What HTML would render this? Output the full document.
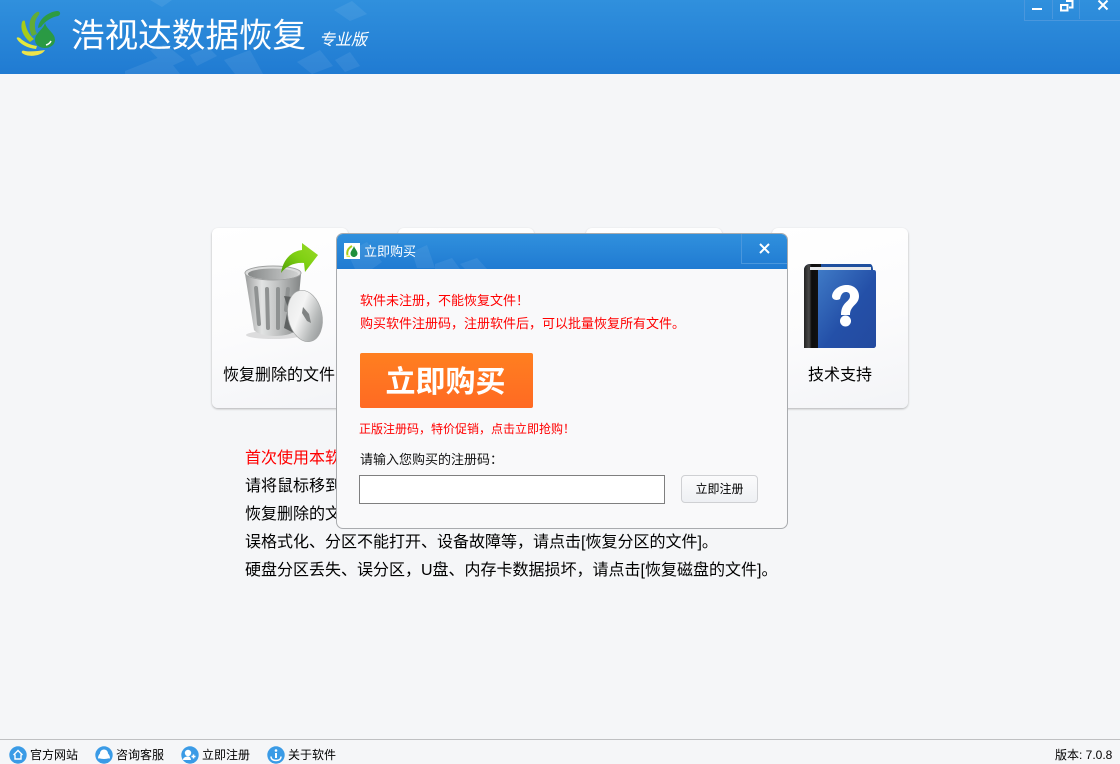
<!DOCTYPE html>
<html lang="zh"><head><meta charset="utf-8"><title>浩视达数据恢复</title>
<style>
*{box-sizing:border-box;margin:0;padding:0}
html,body{width:1120px;height:764px;overflow:hidden;background:#f5f6f8}
body{position:relative;font-family:"Liberation Sans","Noto Sans CJK SC","WenQuanYi Zen Hei",sans-serif;color:#000}
.a{position:absolute}
.t{position:absolute;white-space:nowrap}
.hdr{background:linear-gradient(#3090dd,#207bd2);overflow:hidden}
.card{position:absolute;top:228px;width:136px;height:180px;border-radius:6px;background:linear-gradient(165deg,#fff 0%,#fbfbfc 55%,#f3f4f7 100%);box-shadow:0 1px 2px rgba(0,0,0,.28)}
.card .t{left:-1px;width:136px;text-align:center;top:136px;font-size:16px;line-height:24px}
.ln{font-size:16px;line-height:28px;left:245px}
.foot{font-size:12px;line-height:16px;top:747px}
</style></head><body>

<div class="a hdr" style="left:0;top:0;width:1120px;height:74px">
<svg class="a" style="left:0;top:0" width="400" height="74" viewBox="0 0 400 74"><g fill="#fff" opacity=".07">
<polygon points="150,0 172,0 162,7"/>
<polygon points="334,10 352,1 367,14 350,21"/>
<polygon points="125,71 165,55 180,74 125,74"/>
<polygon points="150,50 165,44 185,60 167,68"/>
<polygon points="190,55 208,47 217,56 197,66"/>
<polygon points="224,60 250,50 263,74 235,74"/>
<polygon points="297,62 320,50 333,66 312,74"/>
<polygon points="335,60 350,52 360,66 345,72"/>
</g></svg>
</div>

<svg class="a" style="left:12px;top:4px" width="56" height="60" viewBox="0 0 56 60">
<path d="M26 24C27 15 36 8 45 7C49 7 49 11 46 12C40 13 33 17 29 23Z" fill="#2d9b44"/>
<path d="M20 32C15 21 18 12 25 8C28 7 28 10 26 12C22 17 22 24 25 30Z" fill="#62ac36"/>
<path d="M18 38C11 32 8 25 10 18C11 16 13 16 13 18C14 25 17 31 22 35Z" fill="#a8cc18"/>
<path d="M5 35C4 33 6 33 8 34C12 38 18 41 25 42L24 45C15 44 8 40 5 35Z" fill="#e3e83c"/>
<path d="M10 49C9 47 11 46 13 47C19 48 26 47 33 46C30 52 16 54 10 49Z" fill="#eee44a"/>
<path d="M33 19C35 26 43 29 43 36C43 41 38 44 33 44C28 44 23 41 23 36C23 29 31 26 33 19Z" fill="#2a9a44"/>
<path d="M34 41C36 40.500 38 39 39 37" stroke="#fff" stroke-width="1.500" fill="none"/>
</svg>

<div class="t" style="left:71px;top:15px;font-size:33.600px;line-height:44px;color:#fff">浩视达数据恢复</div>
<div class="t" style="left:319px;top:30px;font-size:16px;line-height:22px;color:#fff;font-style:italic">专业版</div>

<div class="a" style="left:1024px;top:0;width:96px;height:21px;border:1px solid #4a97dd;border-top:0;border-right:0"></div>
<div class="a" style="left:1052px;top:0;width:1px;height:19px;background:#4a97dd"></div>
<div class="a" style="left:1079px;top:0;width:1px;height:19px;background:#4a97dd"></div>
<div class="a" style="left:1032px;top:8px;width:10px;height:2px;background:#fff"></div>
<svg class="a" style="left:1060px;top:0" width="14" height="12" viewBox="0 0 14 12"><path d="M6 1H12.500V7.500H9M1 5H7.500V10.500H1Z" fill="none" stroke="#fff" stroke-width="2"/></svg>
<svg class="a" style="left:1097px;top:0" width="12" height="11" viewBox="0 0 12 11"><path d="M1.500 .5L10.500 9.500M10.500 .5L1.500 9.500" stroke="#fff" stroke-width="2"/></svg>

<div class="card" style="left:212px"><div class="t">恢复删除的文件</div></div>
<div class="card" style="left:398px"><div class="t">恢复分区的文件</div></div>
<div class="card" style="left:586px"><div class="t">恢复磁盘的文件</div></div>
<div class="card" style="left:772px"><div class="t" style="left:0">技术支持</div></div>

<svg class="a" style="left:240px;top:240px" width="90" height="110" viewBox="0 0 90 110">
<defs>
<linearGradient id="can" x1="0" x2="1" y1="0" y2="0"><stop offset="0" stop-color="#9c9e9e"/><stop offset=".3" stop-color="#e2e3e3"/><stop offset=".6" stop-color="#bfc1c1"/><stop offset="1" stop-color="#828585"/></linearGradient>
<linearGradient id="lid" x1="0" x2="1" y1="0" y2="1"><stop offset="0" stop-color="#e4e5e5"/><stop offset=".4" stop-color="#f4f4f4"/><stop offset=".7" stop-color="#b5b8b8"/><stop offset="1" stop-color="#85888a"/></linearGradient>
<linearGradient id="arr" x1="0" x2="1" y1="1" y2="0"><stop offset="0" stop-color="#4f9e08"/><stop offset=".5" stop-color="#7fd012"/><stop offset="1" stop-color="#9ad92a"/></linearGradient>
<linearGradient id="in" x1="0" x2="1" y1="0" y2="0"><stop offset="0" stop-color="#858888"/><stop offset=".6" stop-color="#b2b4b4"/><stop offset="1" stop-color="#cfd1d1"/></linearGradient>
</defs>
<ellipse cx="34" cy="95" rx="28" ry="4" fill="#000" opacity=".12"/>
<path d="M5 34L14 90C20 98 50 98 56 90L61 34Z" fill="url(#can)"/>
<ellipse cx="33" cy="33" rx="28" ry="7" fill="#dcdddd" stroke="#a0a2a2" stroke-width="1"/>
<ellipse cx="33" cy="34" rx="25" ry="5.500" fill="url(#in)"/>
<g stroke="#8f9292" stroke-width="4" stroke-linecap="round"><path d="M16 48L19 84"/><path d="M27 49L28 88"/><path d="M38 49L38 88"/><path d="M48 49L46 70"/></g>
<path d="M41 33C43 19 52 11 62 10L62 3L78 15L65 32L64 23C55 22 46 26 41 33Z" fill="url(#arr)"/>
<path d="M44 56L48 68L44 88L56 94L60 58Z" fill="#5f6262"/>
<ellipse cx="65" cy="76" rx="17" ry="26" transform="rotate(-12 65 76)" fill="url(#lid)" stroke="#a5a7a7" stroke-width=".7"/>
<path d="M63 67L69 74L71 83L67 81L62 73Z" fill="#7f8282"/>
</svg>

<svg class="a" style="left:804px;top:264px" width="73" height="85" viewBox="0 0 73 85">
<defs><linearGradient id="bk" x1="0" x2="1" y1="0" y2="1"><stop offset="0" stop-color="#3f7ac6"/><stop offset=".55" stop-color="#2450a8"/><stop offset="1" stop-color="#234a9f"/></linearGradient>
<linearGradient id="sp" x1="0" x2="1" y1="0" y2="0"><stop offset="0" stop-color="#222"/><stop offset=".3" stop-color="#4a4a4a"/><stop offset=".45" stop-color="#0c0c0c"/><stop offset="1" stop-color="#141414"/></linearGradient></defs>
<path d="M0 84V6C0 2 3 0 6 0H66C68 0 69 3 69 6H14V84Z" fill="#1f4f9e"/>
<path d="M0 84V6C0 2 3 0 6 0H17V84Z" fill="url(#sp)"/>
<path d="M6 3H67V6H6Z" fill="#e7e8ea"/>
<path d="M14 6H70C72 6 72 8 72 9V81C72 83 71 84 69 84H14Z" fill="url(#bk)"/>
<path d="M28 32C29 25 36 21 43 21C50 21 55 26 55 32C55 41 46 41 46 51H37C37 38 46 38 46 32C46 29 44 28 42 28C39 28 37 30 36 35C33 37 28 36 28 32Z" fill="#fff"/>
<circle cx="41.500" cy="57" r="5.500" fill="#fff"/>
</svg>

<div class="t" style="left:245px;top:445px;font-size:16px;line-height:28px;color:#f00">首次使用本软件，请仔细阅读以下说明：</div>
<div class="t ln" style="top:473px">请将鼠标移到对应的功能按钮上，查看功能说明。</div>
<div class="t ln" style="top:501px">恢复删除的文件，请点击[恢复删除的文件]。</div>
<div class="t ln" style="top:529px">误格式化、分区不能打开、设备故障等，请点击[恢复分区的文件]。</div>
<div class="t ln" style="top:557px">硬盘分区丢失、误分区，U盘、内存卡数据损坏，请点击[恢复磁盘的文件]。</div>

<!-- dialog -->
<div class="a" style="left:336px;top:233px;width:452px;height:296px;border:1px solid #a9abae;border-radius:7px;background:#f9f9fa;overflow:hidden">
<div class="a hdr" style="left:0;top:0;width:450px;height:35px">
<svg class="a" style="left:0;top:0" width="200" height="35" viewBox="0 0 200 35"><g fill="#fff" opacity=".07">
<polygon points="10,18 30,8 45,28 35,35 18,35"/>
<polygon points="75,18 90,11 98,34 80,34"/>
<polygon points="98,30 115,24 123,35 98,35"/>
<polygon points="123,30 140,24 150,35 128,35"/>
</g></svg>
<div class="a" style="left:404px;top:0;width:46px;height:30px;border-left:1px solid #4a97dd;border-bottom:1px solid #4a97dd"></div>
</div>
<div class="a" style="left:7px;top:9px;width:16px;height:16px;background:#fff"></div>
<svg class="a" style="left:7px;top:9px" width="16" height="16" viewBox="0 0 16 16"><path d="M3.500 12C2.500 8 4.500 5 8 3" stroke="#a8cc18" stroke-width="2" fill="none"/><path d="M6 13.500L2.500 13" stroke="#e3e83c" stroke-width="1.500"/><path d="M10 3C11 6 13.500 8 13.500 10.500C13.500 12.500 11.500 14 10 14C8 14 6.500 12.500 6.500 10.500C6.500 8 9 6 10 3Z" fill="#1f8f3c"/></svg>
<div class="t" style="left:27px;top:8px;font-size:13px;line-height:20px;color:#fff">立即购买</div>
<svg class="a" style="left:422px;top:9px" width="11" height="11" viewBox="0 0 11 11"><path d="M1 1L10 10M10 1L1 10" stroke="#fff" stroke-width="2"/></svg>
<div class="t" style="left:23px;top:58px;font-size:13px;line-height:18px;color:#f00">软件未注册，不能恢复文件！</div>
<div class="t" style="left:23px;top:81px;font-size:13px;line-height:18px;color:#f00">购买软件注册码，注册软件后，可以批量恢复所有文件。</div>
<div class="a" style="left:23px;top:119px;width:173px;height:55px;border-radius:2px;background:linear-gradient(#ff7f20,#ff6a23)"></div>
<div class="t" style="left:22px;top:121px;width:173px;height:55px;text-align:center;font-size:30px;font-weight:700;line-height:55px;color:#fff">立即购买</div>
<div class="t" style="left:22px;top:186px;font-size:12px;line-height:18px;color:#f00">正版注册码，特价促销，点击立即抢购！</div>
<div class="t" style="left:23px;top:217px;font-size:13px;line-height:18px;color:#111">请输入您购买的注册码：</div>
<div class="a" style="left:22px;top:241px;width:306px;height:29px;border:1px solid #7f7f7f;background:#fff"></div>
<div class="a" style="left:344px;top:241px;width:77px;height:28px;border:1px solid #cfd0d3;border-radius:4px;background:linear-gradient(#fbfbfc,#eef0f3);text-align:center;font-size:12px;line-height:27px">立即注册</div>
</div>

<!-- footer -->
<div class="a" style="left:0;top:739px;width:1120px;height:1px;background:#bfc0c2"></div>
<svg class="a" style="left:9px;top:745px" width="340" height="19" viewBox="0 0 340 19">
<g fill="#3a9be6"><circle cx="9" cy="10" r="8.700"/><circle cx="95" cy="10" r="8.700"/><circle cx="181" cy="10" r="8.700"/><circle cx="267" cy="10" r="8.700"/></g>
<path d="M4.500 10L9 5.500L13.500 10M6 9.500V14H12V9.500" fill="none" stroke="#fff" stroke-width="1.400"/>
<path d="M95 4.500C97.500 4.500 99 6.500 99 8.500C100 9.500 101 11 101 13.500C99 13 98 14 95 14C92 14 91 13 89 13.500C89 11 90 9.500 91 8.500C91 6.500 92.500 4.500 95 4.500Z" fill="#fff"/>
<circle cx="179" cy="8" r="3.200" fill="#fff"/><path d="M174 15C174 12.500 176.500 11.500 179 11.500C180.500 11.500 181.500 12 182 15Z" fill="#fff"/><path d="M184.500 9.500V13.500M182.500 11.500H186.500" stroke="#fff" stroke-width="1.500"/>
<circle cx="267" cy="5.500" r="1.300" fill="#fff"/><path d="M267 8V13" stroke="#fff" stroke-width="2"/><path d="M262 11.500C262 14.500 264.500 15.500 267 15.500C269.500 15.500 272 14.500 272 11.500" fill="none" stroke="#fff" stroke-width="1.500"/>
</svg>
<div class="t foot" style="left:30px">官方网站</div>
<div class="t foot" style="left:116px">咨询客服</div>
<div class="t foot" style="left:202px">立即注册</div>
<div class="t foot" style="left:288px">关于软件</div>
<div class="t foot" style="left:1055px">版本: 7.0.8</div>
</body></html>
